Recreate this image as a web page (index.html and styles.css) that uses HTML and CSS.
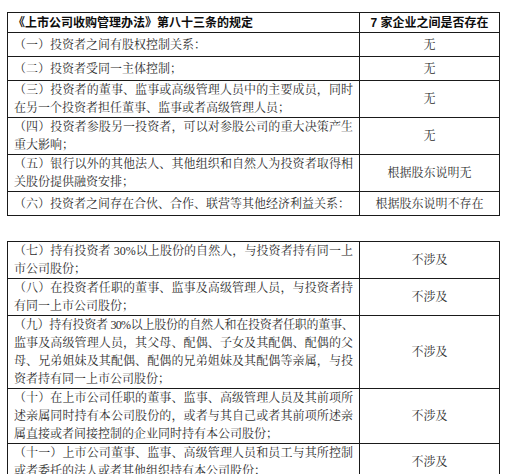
FILE: index.html
```html
<!DOCTYPE html>
<html lang="zh-CN">
<head>
<meta charset="utf-8">
<title>第八十三条</title>
<link rel="stylesheet" href="styles.css">
</head>
<body>
<div class="page">
  <table class="t t1">
    <colgroup><col class="c-left"><col class="c-right"></colgroup>
    <tr class="head">
      <th class="hl">《上市公司收购管理办法》第八十三条的规定</th>
      <th class="hr">7 家企业之间是否存在</th>
    </tr>
    <tr class="one"><td class="l">（一）投资者之间有股权控制关系：</td><td class="r">无</td></tr>
    <tr class="one"><td class="l">（二）投资者受同一主体控制；</td><td class="r">无</td></tr>
    <tr class="two"><td class="l">（三）投资者的董事、监事或高级管理人员中的主要成员，同时在另一个投资者担任董事、监事或者高级管理人员；</td><td class="r">无</td></tr>
    <tr class="two"><td class="l">（四）投资者参股另一投资者，可以对参股公司的重大决策产生重大影响；</td><td class="r">无</td></tr>
    <tr class="two"><td class="l">（五）银行以外的其他法人、其他组织和自然人为投资者取得相关股份提供融资安排；</td><td class="r">根据股东说明无</td></tr>
    <tr class="one"><td class="l">（六）投资者之间存在合伙、合作、联营等其他经济利益关系：</td><td class="r">根据股东说明不存在</td></tr>
  </table>

  <table class="t t2">
    <colgroup><col class="c-left"><col class="c-right"></colgroup>
    <tr><td class="l"><span class="ln">（七）持有投资者 30%以上股份的自然人，与投资者持有同一上</span>市公司股份；</td><td class="r">不涉及</td></tr>
    <tr><td class="l"><span class="ln">（八）在投资者任职的董事、监事及高级管理人员，与投资者持</span>有同一上市公司股份；</td><td class="r">不涉及</td></tr>
    <tr><td class="l"><span class="ln tight">（九）持有投资者 30%以上股份的自然人和在投资者任职的董事、</span><span class="ln">监事及高级管理人员，其父母、配偶、子女及其配偶、配偶的父</span><span class="ln">母、兄弟姐妹及其配偶、配偶的兄弟姐妹及其配偶等亲属，与投</span>资者持有同一上市公司股份；</td><td class="r">不涉及</td></tr>
    <tr><td class="l"><span class="ln">（十）在上市公司任职的董事、监事、高级管理人员及其前项所</span><span class="ln">述亲属同时持有本公司股份的，或者与其自己或者其前项所述亲</span>属直接或者间接控制的企业同时持有本公司股份；</td><td class="r">不涉及</td></tr>
    <tr><td class="l"><span class="ln">（十一）上市公司董事、监事、高级管理人员和员工与其所控制</span>或者委托的法人或者其他组织持有本公司股份；</td><td class="r">不涉及</td></tr>
  </table>
</div>
</body>
</html>
```

FILE: styles.css
```css
html, body {
  margin: 0;
  padding: 0;
  background: #ffffff;
}

body {
  font-family: "Liberation Serif", "Noto Serif CJK SC", "Noto Sans CJK SC", serif;
  color: #2e2e2e;
}

.page {
  padding: 12px 0 0 7px;
}

.t {
  border-collapse: collapse;
  table-layout: fixed;
  width: 492px;
  font-size: 12px;
  line-height: 18px;
}

col.c-left { width: 352px; }
col.c-right { width: 140px; }

.t th,
.t td {
  border: 1px solid #1a1a1a;
  padding: 0 6px;
  vertical-align: middle;
  overflow: hidden;
}

.t th {
  font-family: "Liberation Sans", "Noto Sans CJK SC", sans-serif;
  font-weight: 700;
  color: #0d0d0d;
  white-space: nowrap;
}

.t th.hl { text-align: left; padding-left: 5px; }
.t th.hr { text-align: center; }

tr.head { height: 20px; }
tr.one { height: 24px; }
tr.two { height: 36px; }

td.l {
  text-align: justify;
  text-align-last: left;
}

td.r {
  text-align: center;
}

.ln {
  display: block;
  white-space: nowrap;
  text-align: justify;
  text-align-last: justify;
}

.ln.tight {
  letter-spacing: -0.75px;
}

.t2 {
  margin-top: 25px;
}
```
